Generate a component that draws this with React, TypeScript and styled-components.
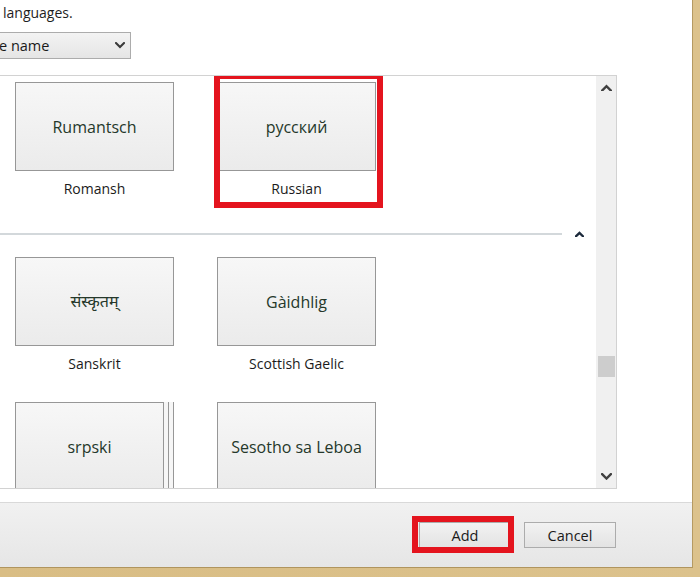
import React from "react"
import styled, { createGlobalStyle } from "styled-components"

type Lang = {
  native: string
  // the last row is scrolled past the bottom edge, so its labels are not shown
  name?: string
  stacked?: boolean
  selected?: boolean
}

const groups: Lang[][] = [
  [
    { native: "Rumantsch", name: "Romansh" },
    { native: "русский", name: "Russian", selected: true },
  ],
  [
    { native: "संस्कृतम्", name: "Sanskrit" },
    { native: "Gàidhlig", name: "Scottish Gaelic" },
    { native: "srpski", stacked: true },
    { native: "Sesotho sa Leboa" },
  ],
]

const Chevron = ({ up, size = 10, color = "#3a3a3a", weight = 2 }: { up?: boolean; size?: number; color?: string; weight?: number }) => (
  <svg width={size} height={size * 0.7} viewBox="0 0 10 7" fill="none">
    <polyline
      points={up ? "1,6 5,2 9,6" : "1,1 5,5 9,1"}
      stroke={color}
      strokeWidth={weight}
      strokeLinecap="square"
    />
  </svg>
)

export default function App() {
  return (
    <>
      <GlobalStyle />
      <Window>
        <Dialog>
          <Intro>languages.</Intro>
          <SortSelect>
            <SortValue>e name</SortValue>
            <Chevron />
          </SortSelect>
          <ListBox>
            <ListContent>
              {groups.map((group, gi) => (
                <React.Fragment key={gi}>
                  {gi > 0 && (
                    <GroupHeader>
                      <GroupLine />
                      <Chevron up size={9} color="#1c2a3c" weight={2.6} />
                    </GroupHeader>
                  )}
                  <TileGrid>
                    {group.map((lang) => (
                      <Item key={lang.native}>
                        <Tile $stacked={lang.stacked}>{lang.native}</Tile>
                        {lang.name && <Label>{lang.name}</Label>}
                        {lang.selected && <Highlight $l={-3} $t={-9} $r={-7} $b={-3} />}
                      </Item>
                    ))}
                  </TileGrid>
                </React.Fragment>
              ))}
            </ListContent>
            <ScrollBar>
              <ScrollButton>
                <Chevron up size={11} color="#404040" weight={2.2} />
              </ScrollButton>
              <Track>
                <Thumb $offset={257} />
              </Track>
              <ScrollButton>
                <Chevron size={11} color="#404040" weight={2.2} />
              </ScrollButton>
            </ScrollBar>
          </ListBox>
          <Footer>
            <ButtonWrap>
              <Button>Add</Button>
              <Highlight $l={-7} $t={-6} $r={-3} $b={-5} />
            </ButtonWrap>
            <ButtonWrap>
              <Button>Cancel</Button>
            </ButtonWrap>
          </Footer>
        </Dialog>
      </Window>
    </>
  )
}

const GlobalStyle = createGlobalStyle`
  html, body {
    margin: 0;
    padding: 0;
  }
  body {
    width: 700px;
    height: 577px;
    overflow: hidden;
    font-family: "Open Sans", "Noto Sans", "Noto Sans Devanagari", sans-serif;
  }
`

const Window = styled.div`
  width: 700px;
  height: 577px;
  box-sizing: border-box;
  display: flex;
  padding: 0 7px 9px 0;
  background: linear-gradient(90deg, #d9bd84, #dcc28c);
`

const Dialog = styled.div`
  flex: 1;
  display: flex;
  flex-direction: column;
  background: #ffffff;
  border-right: 1px solid #b59a62;
  border-bottom: 1px solid #b0955e;
`

const Intro = styled.div`
  margin: 3px 0 0 3px;
  font-size: 14px;
  line-height: 20px;
  color: #1e1e1e;
`

const SortSelect = styled.div`
  margin-top: 9px;
  width: 131px;
  height: 27px;
  box-sizing: border-box;
  display: flex;
  align-items: center;
  justify-content: space-between;
  padding-right: 5px;
  border: 1px solid #acacac;
  border-left: none;
  background: linear-gradient(#f3f3f3, #e5e5e5);
`

const SortValue = styled.span`
  margin-left: -1px;
  font-size: 14.5px;
  color: #1a1a1a;
`

const ListBox = styled.div`
  margin: 16px 75px 0 0;
  height: 414px;
  box-sizing: border-box;
  display: flex;
  border: 1px solid #d2d2d2;
  border-left: none;
  overflow: hidden;
`

const ListContent = styled.div`
  flex: 1;
  overflow: hidden;
  padding: 6px 0 0 15px;
`

const TileGrid = styled.div`
  display: grid;
  grid-template-columns: repeat(2, 159px);
  column-gap: 43px;
  row-gap: 22px;
`

const Item = styled.div`
  position: relative;
  display: flex;
  flex-direction: column;
`

const Tile = styled.div<{ $stacked?: boolean }>`
  height: 89px;
  box-sizing: border-box;
  width: ${(p) => (p.$stacked ? "149px" : "159px")};
  display: flex;
  align-items: center;
  justify-content: center;
  border: 1px solid #979797;
  background: linear-gradient(#f7f7f7, #ebebeb);
  font-family: "Open Sans", "Noto Sans Devanagari", "Noto Sans", sans-serif;
  font-size: 16px;
  color: #25382a;
  box-shadow: ${(p) =>
    p.$stacked ? "4px 0 0 0 #f6f6f6, 5px 0 0 0 #979797, 9px 0 0 0 #f6f6f6, 10px 0 0 0 #979797" : "none"};
`

const Label = styled.div`
  height: 34px;
  display: flex;
  align-items: center;
  justify-content: center;
  font-size: 14px;
  color: #1b1b1b;
`

const Highlight = styled.span<{ $l: number; $t: number; $r: number; $b: number }>`
  position: absolute;
  left: ${(p) => p.$l}px;
  top: ${(p) => p.$t}px;
  right: ${(p) => p.$r}px;
  bottom: ${(p) => p.$b}px;
  border: 6px solid #e4141e;
  pointer-events: none;
`

const GroupHeader = styled.div`
  display: flex;
  align-items: center;
  gap: 13px;
  height: 8px;
  margin: 25px 0 19px -15px;
  padding-right: 12px;
`

const GroupLine = styled.div`
  flex: 1;
  height: 2px;
  background: #d3d8db;
`

const ScrollBar = styled.div`
  width: 20px;
  display: flex;
  flex-direction: column;
  background: #f0f0f0;
`

const ScrollButton = styled.div`
  height: 23px;
  display: flex;
  align-items: center;
  justify-content: center;
`

const Track = styled.div`
  flex: 1;
  display: flex;
  justify-content: center;
`

const Thumb = styled.div<{ $offset: number }>`
  margin-top: ${(p) => p.$offset}px;
  width: 17px;
  height: 21px;
  background: #cdcdcd;
`

const Footer = styled.div`
  margin-top: 13px;
  flex: 1;
  display: flex;
  justify-content: flex-end;
  align-items: flex-start;
  gap: 13px;
  padding: 19px 76px 0 0;
  border-top: 1px solid #d9d9d9;
  background: linear-gradient(#f1f1f1, #e6e6e6);
`

const ButtonWrap = styled.div`
  position: relative;
`

const Button = styled.button`
  width: 92px;
  height: 26px;
  border: 1px solid #acacac;
  background: linear-gradient(#f2f2f2, #e3e3e3);
  font-family: "Open Sans", "Noto Sans", sans-serif;
  font-size: 14.5px;
  color: #1a1a1a;
  padding: 0;
`
